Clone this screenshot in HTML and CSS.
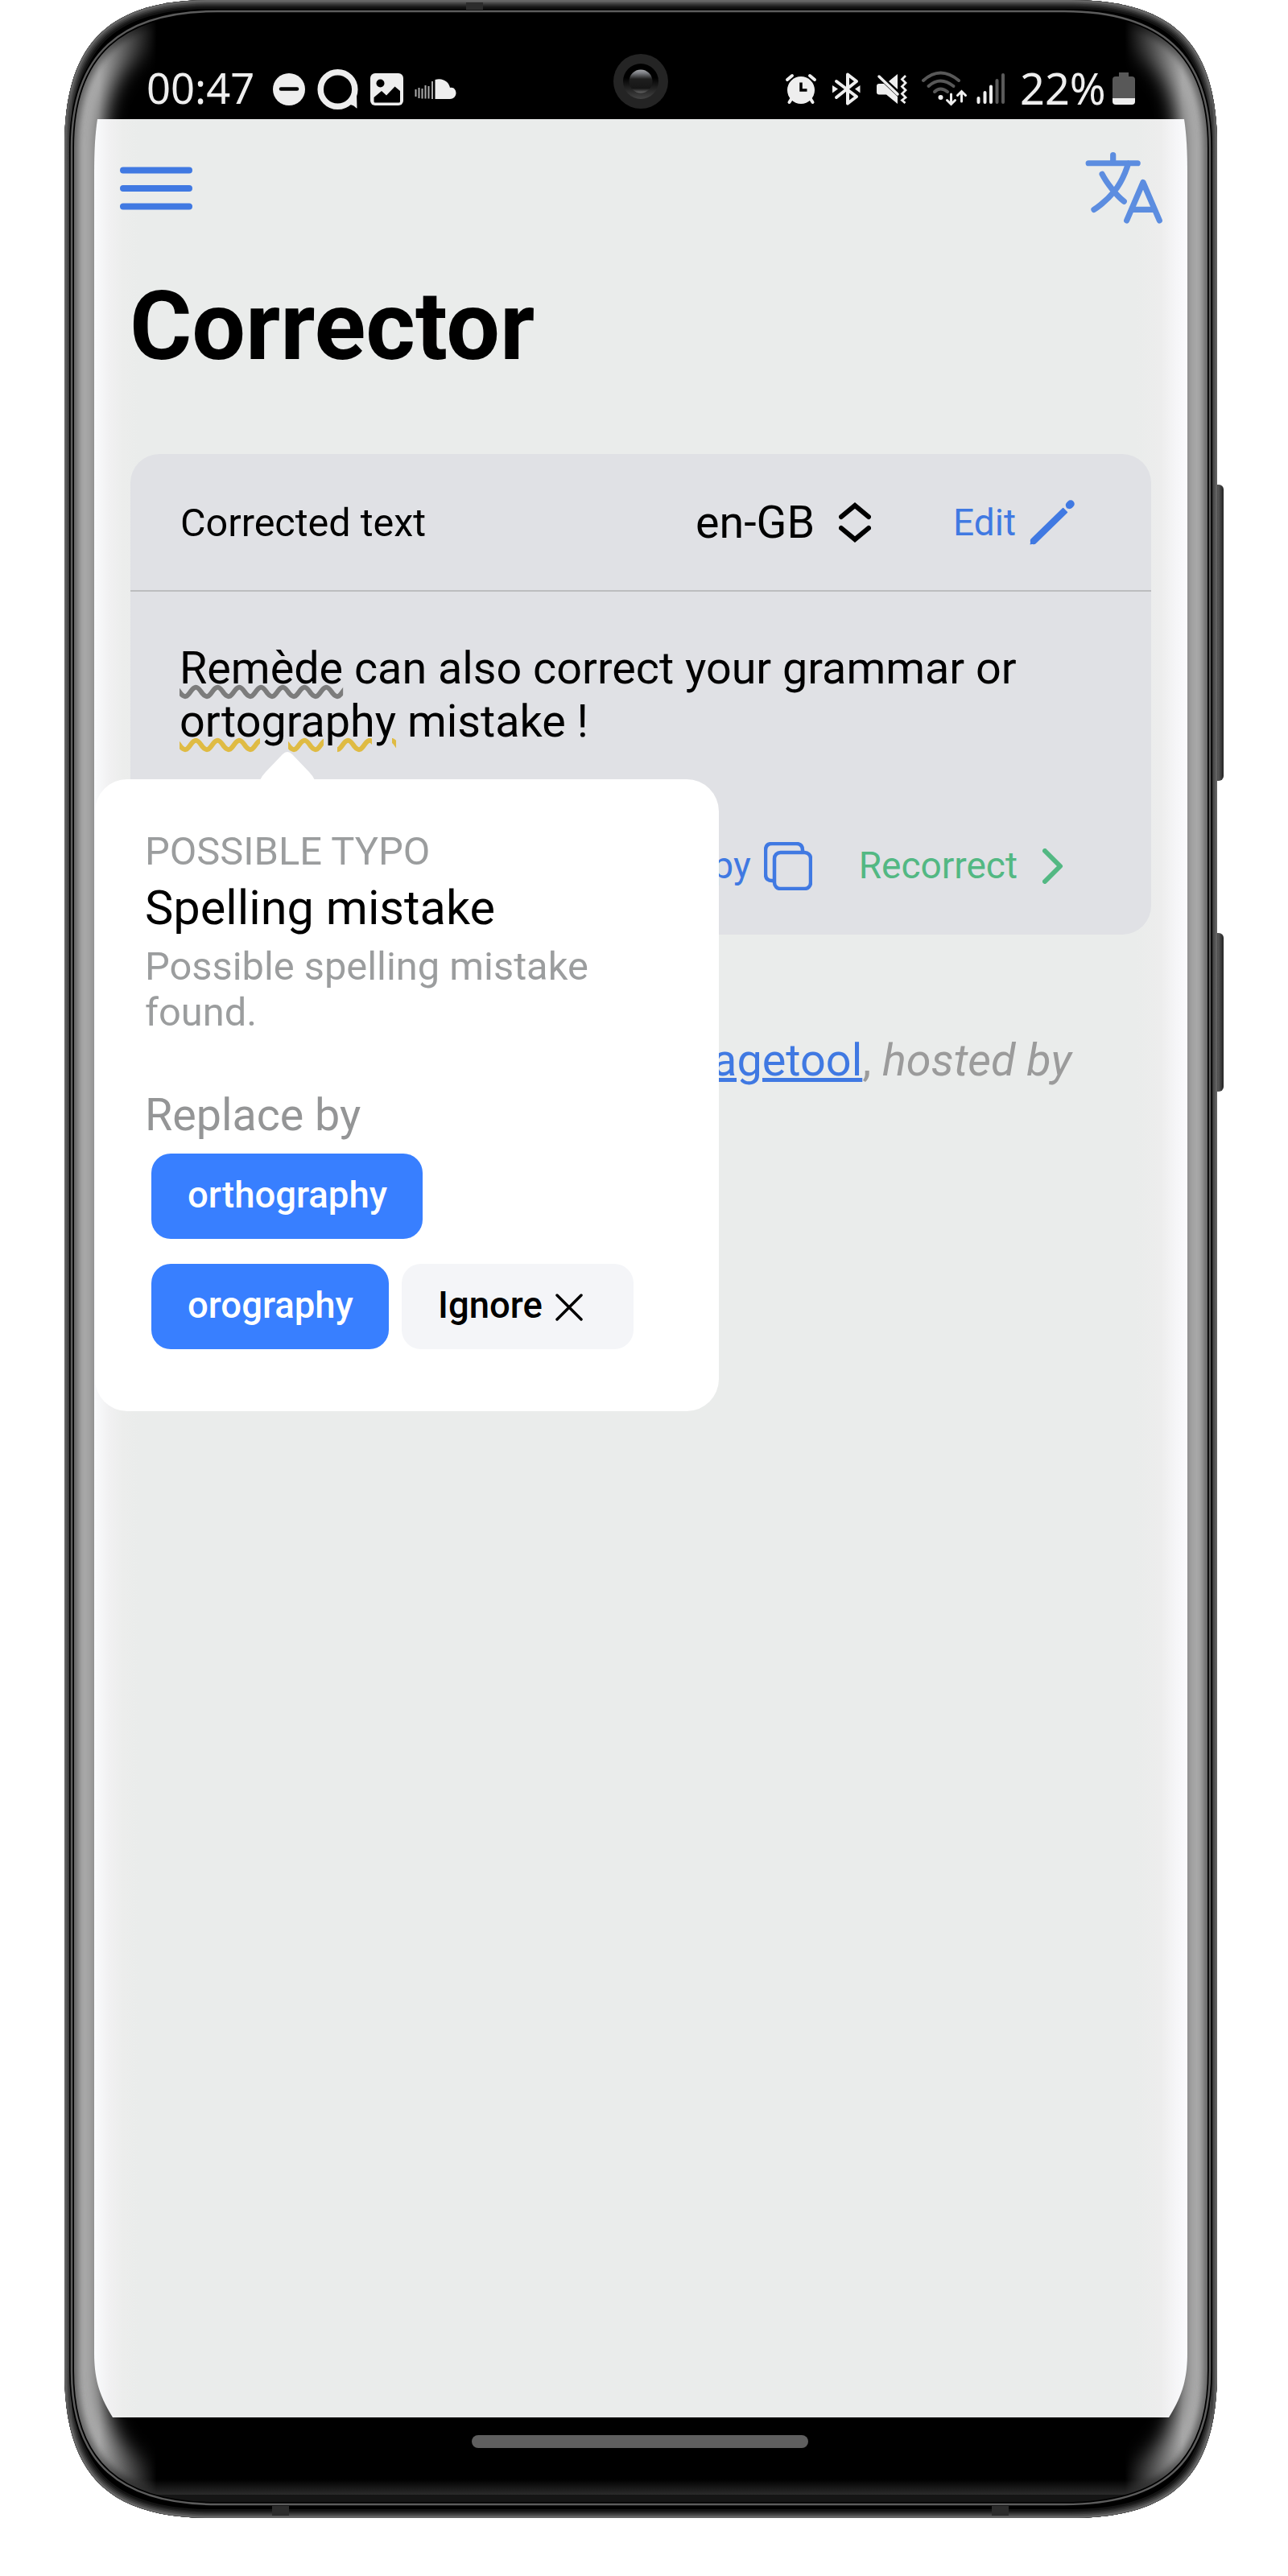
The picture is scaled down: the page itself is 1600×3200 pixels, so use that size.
FILE: index.html
```html
<!DOCTYPE html>
<html lang="en">
<head>
<meta charset="utf-8">
<title>Corrector</title>
<link rel="stylesheet" href="styles.css">
</head>
<body>
<div class="phone">
  <svg class="frame" viewBox="80 0 1442 3130" width="1442" height="3130" aria-hidden="true">
    <defs>
      <path id="shell" d="M80 183C80 58 130 0 262 0H1330C1462 0 1512 58 1512 183V2945C1512 3070 1462 3128 1330 3128H262C130 3128 80 3070 80 2945Z"/>
      <path id="glass" d="M89 183C89 68 150 14 270 14H1322C1442 14 1503 68 1503 183V2945C1503 3060 1442 3111 1322 3111H270C150 3111 89 3060 89 2945Z"/>
      <clipPath id="shellClip"><use href="#shell"/></clipPath>
      <clipPath id="glassClip"><use href="#glass"/></clipPath>
      <filter id="soft" filterUnits="userSpaceOnUse" x="0" y="-100" width="1600" height="3400"><feGaussianBlur stdDeviation="12"/></filter>
      <filter id="thin" filterUnits="userSpaceOnUse" x="0" y="-100" width="1600" height="3400"><feGaussianBlur stdDeviation="4"/></filter>
      <linearGradient id="sideFade" gradientUnits="userSpaceOnUse" x1="80" x2="1512" y1="0" y2="0">
        <stop offset="0" stop-color="#fff"/><stop offset=".03" stop-color="#fff"/><stop offset=".08" stop-color="#000"/>
        <stop offset=".92" stop-color="#000"/><stop offset=".97" stop-color="#fff"/><stop offset="1" stop-color="#fff"/>
      </linearGradient>
      <mask id="sideMask" maskUnits="userSpaceOnUse" x="0" y="0" width="1600" height="3200"><rect width="1600" height="3200" fill="url(#sideFade)"/></mask>
      <linearGradient id="vertFade" gradientUnits="userSpaceOnUse" x1="0" x2="0" y1="0" y2="3128">
        <stop offset=".03" stop-color="#000"/><stop offset=".065" stop-color="#fff"/><stop offset=".94" stop-color="#fff"/><stop offset=".97" stop-color="#000"/>
      </linearGradient>
      <mask id="vertMask" maskUnits="userSpaceOnUse" x="0" y="0" width="1600" height="3200"><rect width="1600" height="3200" fill="url(#vertFade)"/></mask>
      <linearGradient id="railL"><stop offset="0" stop-color="#6a6a6a"/><stop offset=".5" stop-color="#484848"/><stop offset=".7" stop-color="#333"/><stop offset="1" stop-color="#5c5c5c"/></linearGradient>
      <linearGradient id="railR"><stop offset="0" stop-color="#5c5c5c"/><stop offset=".3" stop-color="#333"/><stop offset=".5" stop-color="#484848"/><stop offset="1" stop-color="#6a6a6a"/></linearGradient>
      <linearGradient id="chin" x1="0" x2="0" y1="0" y2="1"><stop offset="0" stop-color="#000"/><stop offset="1" stop-color="#2b2b2b"/></linearGradient>
      <linearGradient id="key"><stop offset="0" stop-color="#333"/><stop offset=".55" stop-color="#555"/><stop offset="1" stop-color="#222"/></linearGradient>
    </defs>
    <rect x="1506" y="602" width="14" height="368" rx="6" fill="url(#key)"/>
    <rect x="1506" y="1159" width="14" height="197" rx="6" fill="url(#key)"/>
    <use href="#shell" fill="#000"/>
    <g clip-path="url(#shellClip)" fill="none">
      <use href="#shell" stroke="#131313" stroke-width="22"/>
      <use href="#shell" stroke="#222" stroke-width="17"/>
      <use href="#shell" stroke="#363636" stroke-width="13"/>
      <use href="#shell" stroke="#4c4c4c" stroke-width="9"/>
      <use href="#shell" stroke="#666" stroke-width="5"/>
    </g>
    <g clip-path="url(#shellClip)">
      <g mask="url(#vertMask)">
        <rect x="80" y="60" width="9" height="3008" fill="url(#railL)"/>
        <rect x="1503" y="60" width="9" height="3008" fill="url(#railR)"/>
      </g>
    </g>
    <use href="#glass" fill="#000"/>
    <g clip-path="url(#glassClip)">
      <rect x="89" y="3080" width="1414" height="19" fill="url(#chin)"/>
      <rect x="89" y="3099" width="1414" height="12" fill="#151515"/>
      <g mask="url(#sideMask)" fill="none">
        <use href="#glass" stroke="#ababab" stroke-width="80" filter="url(#soft)"/>
        <use href="#glass" stroke="#5f5f5f" stroke-width="16" filter="url(#thin)"/>
      </g>
    </g>
    <use href="#glass" fill="none" stroke="#000" stroke-width="6"/>
    <use href="#glass" fill="none" stroke="#5c5c5c" stroke-width="2.5"/>
    <g fill="#2c2c2c">
      <rect x="579" y="3" width="21" height="9"/>
      <rect x="338" y="3113" width="21" height="12"/>
      <rect x="1232" y="3113" width="21" height="12"/>
    </g>
  </svg>

  <div class="status">
    <span class="status-text">00:47</span>
    <svg class="s-dnd" viewBox="339 85 40 50" width="40" height="50"><circle cx="359" cy="111" r="20" fill="#eee"/><path d="M349 110.500H369" stroke="#000" stroke-width="4.500" stroke-linecap="round"/></svg>
    <svg class="s-chat" viewBox="394 85 52 54" width="52" height="54"><path d="M434 130C440 130 441 134 443.500 134.500L443 117Z" fill="#eee"/><circle cx="419.500" cy="111" r="21.300" fill="#000" stroke="#eee" stroke-width="7.500"/></svg>
    <svg class="s-image" viewBox="460 85 41 50" width="41" height="50"><rect x="460" y="91" width="41" height="40" rx="6" fill="#eee"/><circle cx="472.500" cy="103.500" r="5" fill="#000"/><path d="M464.500 121L474 113L480 118.500L490.500 107.500L497 113V126Q497 127.500 495.500 127.500H466Q464.500 127.500 464.500 126Z" fill="#000"/></svg>
    <svg class="s-cloud" viewBox="515 85 52 50" width="52" height="50"><path d="M540.500 99C550 96 558 102 559 109C564 108 566.500 112 566.500 115.500C566.500 120 563 123 559 123H540.500Z" fill="#eee"/><path d="M516.500 111V120M520.500 109V122M524.500 110V122.500M528.500 106V122.500M532.500 107V122.500M537 101V123" stroke="#aaa" stroke-width="2"/></svg>
    <svg class="s-alarm" viewBox="974 85 42 50" width="42" height="50"><circle cx="995" cy="112" r="17" fill="#eee"/><path d="M983 123L980.500 127M1007 123L1009.500 127M978 99L984 94M1012 99L1006 94" stroke="#eee" stroke-width="4" stroke-linecap="round"/><path d="M995 102.500V112H1002.500" fill="none" stroke="#000" stroke-width="3.500"/></svg>
    <svg class="s-bt" viewBox="1032 85 38 50" width="38" height="50"><path d="M1039 101L1064 120L1053 128.500V92.500L1064 101L1039 121" fill="none" stroke="#eee" stroke-width="4" stroke-linejoin="round" stroke-linecap="round"/><path d="M1034 106L1041 110.500L1034 115.500ZM1068.500 106L1062 110.500L1068.500 115.500Z" fill="#eee"/></svg>
    <svg class="s-mute" viewBox="1087 85 42 50" width="42" height="50"><path d="M1089 107Q1089 104 1092 104H1098L1115 120V129L1101 117.500H1092Q1089 117.500 1089 114.500ZM1104 101L1115 92V111Z" fill="#eee"/><path d="M1092 95L1115 117" stroke="#eee" stroke-width="3.500" stroke-linecap="round"/><path d="M1125 94L1120.500 98.500L1125 103L1120.500 107.500L1125 112L1120.500 116.500L1125 121L1120.500 124.500L1124.500 128" fill="none" stroke="#eee" stroke-width="2.800"/></svg>
    <svg class="s-wifi" viewBox="1144 85 58 50" width="58" height="50"><g fill="none" stroke="#585858" stroke-width="4" stroke-linecap="round"><path d="M1147 100Q1168 81 1191 100"/><path d="M1153.500 107Q1168 94 1184.500 107"/><path d="M1161 114Q1168 107 1177 114"/></g><circle cx="1168.500" cy="121" r="3" fill="#eee"/><path d="M1181.500 117V129M1176.500 124.500L1181.500 129.500L1186.500 124.500M1194.500 126V114M1189.500 118.500L1194.500 113.500L1199.500 118.500" fill="none" stroke="#eee" stroke-width="3" stroke-linecap="round"/></svg>
    <svg class="s-signal" viewBox="1213 85 36 50" width="36" height="50"><path d="M1215.500 122V127M1223.500 115V127M1231 107.500V127" stroke="#eee" stroke-width="4" stroke-linecap="round"/><path d="M1238.500 100V127M1246 93V127" stroke="#5a5a5a" stroke-width="4" stroke-linecap="round"/></svg>
    <span class="status-text s-percent">22%</span>
    <svg class="s-battery" viewBox="1382 85 28 50" width="28" height="50"><path d="M1390 90H1402V95H1406Q1410 95 1410 99V122H1382V99Q1382 95 1386 95H1390Z" fill="#585858"/><path d="M1382 122H1410V126Q1410 130 1406 130H1386Q1382 130 1382 126Z" fill="#eee"/></svg>
    <svg class="camera" viewBox="0 0 68 68" width="68" height="68">
      <defs>
        <linearGradient id="ring" x1="0" x2="0" y1="0" y2="1"><stop offset=".4" stop-color="#000"/><stop offset="1" stop-color="#444"/></linearGradient>
        <linearGradient id="lens" x1="0" x2="0" y1="0" y2="1"><stop offset="0" stop-color="#a4a6aa"/><stop offset=".15" stop-color="#7b7d82"/><stop offset=".4" stop-color="#1e1e1e"/><stop offset=".8" stop-color="#161616"/><stop offset="1" stop-color="#666"/></linearGradient>
      </defs>
      <circle cx="34" cy="34" r="34" fill="#242424"/><circle cx="34" cy="34" r="22" fill="url(#ring)"/><circle cx="34" cy="34" r="14.500" fill="url(#lens)"/>
    </svg>
  </div>

  <main class="screen">
    <header class="toolbar">
      <svg class="menu" viewBox="0 0 90 54" width="90" height="54"><path d="M4 4.500H86M4 27H86M4 49.500H86" stroke="#4079e2" stroke-width="8" stroke-linecap="round"/></svg>
      <svg class="language" viewBox="0 0 512 512" width="108.500" height="108.500" fill="none" stroke="#5c8de0" stroke-width="34" stroke-linecap="round" stroke-linejoin="round"><path d="M48 112H336M192 64V112M272 448L368 224L464 448M301.500 384H434.500M281.300 112S257 206 199 277S80 384 80 384M256 336S221 309 184 261S128 176 128 176"/></svg>
    </header>
    <h1 class="title">Corrector</h1>
    <section class="card">
      <div class="card-head">
        <span class="label">Corrected text</span>
        <span class="locale">en-GB</span>
        <svg class="sort" viewBox="0 0 40 50" width="40" height="50" fill="none" stroke="#000" stroke-width="6" stroke-linecap="round" stroke-linejoin="miter"><path d="M3 18L20 4L37 18M3 32L20 46L37 32"/></svg>
        <a class="action edit">Edit</a>
        <svg class="pencil" viewBox="0 0 56 56" width="56" height="56"><path d="M5 51L43.500 13.500" stroke="#4079e2" stroke-width="8.500" stroke-linecap="round"/><path d="M2 48L0.500 55.500L8 54Z" fill="#4079e2"/><path d="M40 6L50 16" stroke="#e0e1e5" stroke-width="2.500"/><path d="M49.500 6.500L51 5" stroke="#4079e2" stroke-width="9.500" stroke-linecap="round"/></svg>
      </div>
      <div class="card-body">
        <p class="text"><span class="err err-grey">Remède</span> can also correct your grammar or<br><span class="err err-yellow">ortography</span> mistake !</p>
        <div class="actions">
          <a class="action">Copy</a>
          <svg class="copy" viewBox="0 0 60 60" width="60" height="60" fill="none" stroke="#4079e2" stroke-width="4.500"><rect x="13" y="13" width="45" height="45" rx="7.500"/><path d="M48 13V10Q48 2 40 2H10Q2 2 2 10V40Q2 48 10 48H13"/></svg>
          <a class="action green">Recorrect</a>
          <svg class="next" viewBox="0 0 26 44" width="26" height="44" fill="none" stroke="#53b883" stroke-width="6" stroke-linecap="round" stroke-linejoin="round"><path d="M3 3L22 22L3 41"/></svg>
        </div>
      </div>
    </section>
    <p class="credit"><i>Powered by</i> <a>Languagetool</a>, <i>hosted by</i></p>

    <div class="popover">
      <svg class="arrow" viewBox="0 0 68 36" width="68" height="36"><path d="M0 36Q3 30 7 26L28 4Q34 -2 40 4L61 26Q65 30 68 36Z" fill="#fff"/></svg>
      <div class="kind">POSSIBLE TYPO</div>
      <div class="heading">Spelling mistake</div>
      <div class="desc">Possible spelling mistake<br>found.</div>
      <div class="replace">Replace by</div>
      <div class="row"><button class="btn w1">orthography</button></div>
      <div class="row"><button class="btn w2">orography</button><button class="btn light">Ignore<svg viewBox="0 0 34 34" width="34" height="34"><path d="M2 2L32 32M32 2L2 32" stroke="#000" stroke-width="3.500" stroke-linecap="round"/></svg></button></div>
    </div>
  </main>
  <div class="navbar"><div class="pill"></div></div>
</div>
</body>
</html>
```
FILE: styles.css
```css
* { box-sizing: border-box; }
body { margin: 0; background: #fff; font-family: Roboto, "Liberation Sans", sans-serif; color: #000; }
svg { display: block; flex: none; }
.phone { position: relative; width: 1432px; height: 3128px; margin-left: 80px; }
.frame { position: absolute; left: 0; top: 0; }

.status { position: relative; display: flex; align-items: flex-start; height: 148px; padding: 85px 0 0 102px; }
.status-text { width: 157px; height: 50px; flex: none; color: #eee; font: 400 52.500px/48px "Noto Sans", sans-serif; white-space: nowrap; }
.s-chat { margin-left: 15px; }
.s-image { margin-left: 14px; }
.s-cloud { margin-left: 14px; }
.s-alarm { margin-left: 407px; }
.s-bt { margin-left: 16px; }
.s-mute { margin-left: 17px; }
.s-wifi { margin-left: 15px; }
.s-signal { margin-left: 11px; }
.s-percent { width: 115px; margin-left: 18px; font-size: 54px; }
.camera { position: absolute; left: 682px; top: 67px; }

.screen {
  position: relative; width: 1358px; height: 2855px; margin-left: 37px; overflow: hidden;
  background: linear-gradient(90deg, #fafbfd 0, #f1f1f2 18px, #ecedec 36px, #eaeceb 55px, #eaeceb 1295px, #ededed 1325px, #f6f6f8 1345px, #fafbfd 1358px);
  clip-path: path("M4 0C1 20 0 40 0 70V2775C0 2812 9 2832 23 2855H1335C1349 2832 1358 2812 1358 2775V70C1358 40 1357 20 1354 0Z");
}
.toolbar { display: flex; justify-content: space-between; align-items: flex-start; height: 187px; padding: 31px 25px 0 32px; }
.menu { margin-top: 28px; }
.title { margin: 0 44px; font-size: 118.200px; line-height: 142px; height: 140px; font-weight: 700; }
.card { margin: 89px 45px 0; height: 597px; border-radius: 36px; background: #e0e1e5; }
.card-head { display: flex; align-items: center; height: 171px; padding: 1px 95px 0 62px; border-bottom: 2px solid #bcbdbf; }
.label { font-size: 48.500px; margin-right: auto; }
.locale { font-size: 55.600px; }
.sort { margin-left: 30px; }
.action { font-size: 46px; color: #4079e2; }
.edit { margin-left: 102px; }
.pencil { margin-left: 17px; }
.card-body { padding: 62px 109px 0 61px; }
.text { margin: 0; font-size: 55.700px; line-height: 66px; white-space: nowrap; }
.err { text-decoration-line: underline; text-decoration-style: wavy; text-decoration-thickness: 6px; }
.err-grey { text-decoration-color: #7c7c7c; }
.err-yellow { text-decoration-color: #dfbb43; }
.actions { display: flex; align-items: center; justify-content: flex-end; height: 60px; margin-top: 117px; }
.actions .action { margin-top: -3px; }
.copy { margin-left: 16px; }
.actions .green { margin-left: 58px; color: #53b883; }
.next { margin-left: 31px; }
.credit { margin: 123px 144px 0 0; text-align: right; font-size: 55.800px; line-height: 66px; color: #9b9b9b; white-space: nowrap; }
.credit a { color: #4079e2; text-decoration: underline; text-decoration-thickness: 5px; }

.popover { position: absolute; left: 1px; top: 820px; width: 775px; height: 785px; padding: 61px 60px 0 62px; background: #fff; border-radius: 40px; }
.arrow { position: absolute; left: 205px; top: -35px; }
.kind, .desc { font-size: 48.800px; line-height: 57px; color: #9b9d9e; }
.heading { margin: 6px 0 8px; font-size: 59.500px; line-height: 72px; }
.replace { margin-top: 66px; font-size: 55.600px; line-height: 66px; color: #949596; }
.row { display: flex; gap: 16px; margin: 15px 0 0 8px; }
.row + .row { margin-top: 31px; }
.btn { display: flex; align-items: center; height: 106px; margin: 0; padding: 0 0 3px 45px; border: 0; border-radius: 24px; background: #387fff; color: #fff; font: 500 45.500px/54px Roboto, sans-serif; }
.w1 { width: 337px; }
.w2 { width: 295px; }
.light { width: 288px; background: #f4f5f8; color: #000; }
.light svg { margin: 4px 0 0 16px; }

.navbar { position: relative; display: flex; justify-content: center; padding: 22px 2px 0 0; }
.pill { width: 418px; height: 16px; border-radius: 8px; background: #5f5f5f; }
```
